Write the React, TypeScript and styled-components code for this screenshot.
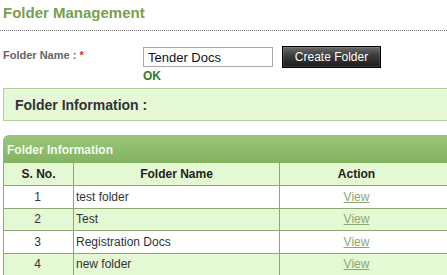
import styled, { createGlobalStyle } from 'styled-components'

const GlobalStyle = createGlobalStyle`
  html, body {
    margin: 0;
    padding: 0;
    background: #fff;
    overflow: hidden;
  }
  body {
    font-family: Arial, 'Liberation Sans', sans-serif;
  }
`

const Page = styled.div`
  width: 447px;
`

const Heading = styled.h2`
  margin: 0;
  padding: 4px 0 9px 3px;
  font-size: 15px;
  line-height: 17px;
  font-weight: bold;
  color: #7a9f4c;
  border-bottom: 1px dotted #777;
`

const Form = styled.div`
  padding: 15px 0 0 3px;
`

const FormRow = styled.div`
  display: flex;
  align-items: flex-start;
`

const Label = styled.label`
  width: 140px;
  padding-top: 2px;
  font-size: 11px;
  font-weight: bold;
  color: #666;
  line-height: 14px;
`

const Required = styled.span`
  color: #d0302a;
`

const Field = styled.div`
  display: flex;
  flex-direction: column;
`

const Controls = styled.div`
  display: flex;
  align-items: flex-start;
`

const TextInput = styled.input`
  width: 130px;
  height: 20px;
  margin-top: 1px;
  box-sizing: border-box;
  border: 1px solid #a9a9a9;
  padding: 0 4px;
  font-family: Arial, 'Liberation Sans', sans-serif;
  font-size: 13px;
  color: #111;
  outline: none;
`

const Button = styled.button`
  margin-left: 9px;
  width: 99px;
  height: 22px;
  box-sizing: border-box;
  border: 1px solid #000;
  background: linear-gradient(#6a6a6a, #3a3a3a 45%, #1c1c1c);
  box-shadow: inset 0 0 0 1px rgba(255, 255, 255, 0.12);
  color: #fff;
  font-family: Arial, 'Liberation Sans', sans-serif;
  font-size: 12px;
  padding: 0;
  cursor: pointer;
`

const Status = styled.div`
  font-size: 12px;
  font-weight: bold;
  line-height: 14px;
  color: #2f7d2a;
  margin-top: 1px;
`

const InfoBox = styled.div`
  margin: 5px 0 0 3px;
  height: 33px;
  box-sizing: border-box;
  border: 1px solid #b3cf9c;
  border-right: none;
  background: #e5f9d6;
  display: flex;
  align-items: center;
  padding-left: 11px;
  font-size: 14px;
  font-weight: bold;
  color: #333;
`

const TableWrap = styled.div`
  margin: 14px 0 0 3px;
`

const TableTitle = styled.div`
  height: 28px;
  box-sizing: border-box;
  padding: 8px 0 0 4px;
  border-radius: 6px 0 0 0;
  background: linear-gradient(#9cc77d, #8dbb6c 55%, #84b362);
  color: #f3fbee;
  font-size: 12px;
  font-weight: bold;
`

const Table = styled.table`
  width: 100%;
  border-collapse: collapse;
  font-size: 12px;
  color: #333;
`

const Th = styled.th<{ $w?: number }>`
  width: ${p => (p.$w ? `${p.$w}px` : 'auto')};
  height: 22px;
  padding: 0 ${p => (p.$w ? 0 : 14)}px 0 0;
  border: 1px solid #8ea874;
  border-top: none;
  background: #e3f8d3;
  font-weight: bold;
  color: #222;
  text-align: center;

  &:last-child {
    border-right: none;
  }
`

const Row = styled.tr<{ $alt: boolean }>`
  background: ${p => (p.$alt ? '#e3f8d3' : '#fff')};
`

const Td = styled.td<{ $align?: 'left' | 'center' }>`
  height: 21.5px;
  padding: 0 ${p => (p.$align === 'left' ? 0 : 2)}px 0 ${p => (p.$align === 'left' ? 2 : 0)}px;
  border: 1px solid #8ea874;
  text-align: ${p => p.$align ?? 'center'};
`

const ActionCell = styled.td`
  height: 21.5px;
  padding: 0 14px 0 0;
  border: 1px solid #8ea874;
  border-right: none;
  text-align: center;
`

const ViewLink = styled.a`
  color: #8aa872;
  text-decoration: underline;
  cursor: pointer;
`

const folders = ['test folder', 'Test', 'Registration Docs', 'new folder']

export default function App() {
  return (
    <Page>
      <GlobalStyle />
      <Heading>Folder Management</Heading>
      <Form>
        <FormRow>
          <Label>
            Folder Name : <Required>*</Required>
          </Label>
          <Field>
            <Controls>
              <TextInput defaultValue="Tender Docs" />
              <Button>Create Folder</Button>
            </Controls>
            <Status>OK</Status>
          </Field>
        </FormRow>
      </Form>
      <InfoBox>Folder Information :</InfoBox>
      <TableWrap>
        <TableTitle>Folder Information</TableTitle>
        <Table>
          <thead>
            <tr>
              <Th $w={69}>S. No.</Th>
              <Th $w={205}>Folder Name</Th>
              <Th>Action</Th>
            </tr>
          </thead>
          <tbody>
            {folders.map((name, i) => (
              <Row key={name} $alt={i % 2 === 1}>
                <Td>{i + 1}</Td>
                <Td $align="left">{name}</Td>
                <ActionCell>
                  <ViewLink>View</ViewLink>
                </ActionCell>
              </Row>
            ))}
          </tbody>
        </Table>
      </TableWrap>
    </Page>
  )
}
